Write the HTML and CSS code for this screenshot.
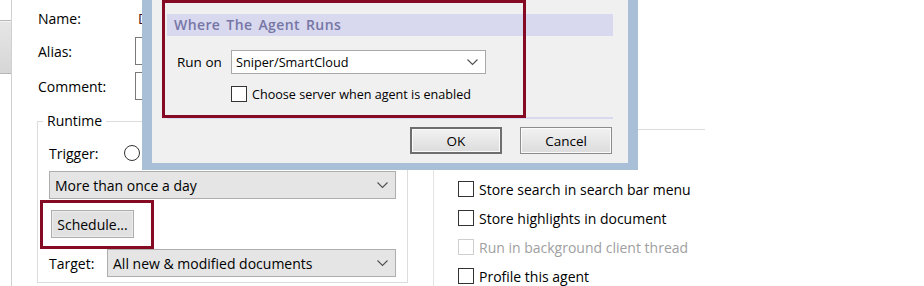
FILE: index.html
```html
<!DOCTYPE html>
<html lang="en">
<head>
  <meta charset="UTF-8" />
  <title>Agent Properties</title>
  <link rel="stylesheet" href="styles.css">
</head>
<body>

<div class="app">
  <div class="side">
    <div class="side-tab"></div>
  </div>

  <div class="main">
    <div class="row row-name">
      <span class="lbl">Name:</span>
      <span class="name-val">D</span>
    </div>
    <div class="row row-alias">
      <span class="lbl">Alias:</span>
      <div class="txt"></div>
    </div>
    <div class="row row-comment">
      <span class="lbl">Comment:</span>
      <div class="txt"></div>
    </div>

    <div class="groups">
      <fieldset class="group runtime">
        <legend>Runtime</legend>
        <div class="trigger">
          <span>Trigger:</span>
          <span class="radio"></span>
        </div>
        <div class="combo grey">
          <span>More than once a day</span>
          <svg class="chev" width="11" height="7" viewBox="0 0 11 7"><polyline points="0.5,0.5 5.5,5.5 10.5,0.5" fill="none" stroke="#505050" stroke-width="1.1"/></svg>
        </div>
        <div class="sched">
          <div class="btn btn-sched">Schedule...</div>
          <!-- highlight box drawn over the button -->
          <div class="mark mark-sched"></div>
        </div>
        <div class="target">
          <span class="lbl-target">Target:</span>
          <div class="combo grey">
            <span>All new &amp; modified documents</span>
            <svg class="chev" width="11" height="7" viewBox="0 0 11 7"><polyline points="0.5,0.5 5.5,5.5 10.5,0.5" fill="none" stroke="#505050" stroke-width="1.1"/></svg>
          </div>
        </div>
      </fieldset>

      <fieldset class="group options">
        <div class="check-row"><span class="box"></span><span>Store search in search bar menu</span></div>
        <div class="check-row"><span class="box"></span><span>Store highlights in document</span></div>
        <div class="check-row disabled"><span class="box"></span><span>Run in background client thread</span></div>
        <div class="check-row"><span class="box"></span><span>Profile this agent</span></div>
      </fieldset>
    </div>
  </div>

  <!-- Dialog floating over the properties page -->
  <div class="dialog">
    <div class="dlg-body">
      <div class="section-head">Where The Agent Runs</div>
      <div class="run-on">
        <span class="run-lbl">Run on</span>
        <div class="combo white">
          <span>Sniper/SmartCloud</span>
          <svg class="chev" width="11" height="7" viewBox="0 0 11 7"><polyline points="0.5,0.5 5.5,5.5 10.5,0.5" fill="none" stroke="#505050" stroke-width="1.1"/></svg>
        </div>
      </div>
      <div class="check-row dlg-check"><span class="box"></span><span>Choose server when agent is enabled</span></div>
      <div class="section-line"></div>
      <div class="dlg-buttons">
        <div class="btn btn-dlg btn-default">OK</div>
        <div class="btn btn-dlg">Cancel</div>
      </div>
      <div class="mark mark-dlg"></div>
    </div>
  </div>
</div>

</body>
</html>
```

FILE: styles.css
```css
body {
  margin: 0;
  background: #ffffff;
  font-family: "Open Sans", "Noto Sans", sans-serif;
  font-size: 14px;
  color: #000;
}
.app {
  position: relative;
  display: flex;
  width: 924px;
  height: 286px;
  overflow: hidden;
}

/* left strip */
.side {
  width: 11px;
  border-right: 1px solid #d0d0d0;
  flex: none;
}
.side-tab {
  margin-top: 20px;
  height: 52px;
  background: linear-gradient(#e6e6e6, #d6d6d6);
  border: 1px solid #b8b8b8;
  border-left: none;
  border-right: none;
  box-shadow: inset 0 28px 0 -27px #f4f4f4;
}

.main {
  padding-left: 26px;
  flex: 1;
}
.row {
  display: flex;
  align-items: center;
  height: 28px;
}
.row-name {
  margin-top: 4px;
}
.row-alias {
  margin-top: 5px;
}
.row-comment {
  margin-top: 7px;
}
.lbl {
  width: 97px;
  flex: none;
}
.name-val {
  color: #4a1010;
  padding-left: 3px;
}
.txt {
  width: 300px;
  height: 26px;
  border: 1px solid #7a7a7a;
  background: #fff;
}

.groups {
  display: flex;
  align-items: flex-start;
  margin-top: 11px;
  margin-left: -1px;
}
.group {
  margin: 0;
  border: 1px solid #dcdcdc;
  padding: 0 11px;
}
.group legend {
  margin-left: -6px;
  padding: 0 4px;
  line-height: 20px;
}
.runtime {
  width: 347px;
  height: 170px;
}
.options {
  width: 236px;
  margin-top: 18px;
  margin-left: 25px;
  padding-left: 24px;
  padding-top: 45px;
  height: 140px;
  border-right: none;
  border-bottom: none;
  border-left-color: #e4e4e4;
}

.trigger {
  display: flex;
  align-items: center;
  height: 20px;
  margin-top: 12px;
}
.radio {
  width: 14px;
  height: 14px;
  border: 1px solid #333;
  border-radius: 50%;
  margin-left: 26px;
}

.combo {
  display: flex;
  align-items: center;
  justify-content: space-between;
  box-sizing: border-box;
  height: 28px;
  padding: 0 7px 0 5px;
  border: 1px solid #adadad;
}
.combo.grey {
  background: #e5e5e5;
  margin-top: 8px;
}
.combo.white {
  background: #fff;
  width: 255px;
  height: 24px;
  border-color: #a9a9a9;
  padding-left: 4px;
  font-size: 12.7px;
}

.sched {
  position: relative;
  margin-top: 11px;
  margin-left: 2px;
  height: 28px;
}
.btn {
  display: flex;
  align-items: center;
  justify-content: center;
  box-sizing: border-box;
  background: #e1e1e1;
  border: 1px solid #adadad;
}
.btn-sched {
  width: 83px;
  height: 28px;
  box-shadow: inset 0 0 0 1px #ececec;
}

.mark {
  position: absolute;
  box-sizing: border-box;
  border: 3px solid #850a23;
}
.mark-sched {
  left: -11px;
  top: -10px;
  width: 114px;
  height: 49px;
}

.target {
  display: flex;
  align-items: center;
  margin-top: 11px;
}
.target .combo {
  margin-top: 0;
  flex: 1;
}
.lbl-target {
  width: 58px;
  flex: none;
}

.check-row {
  display: flex;
  align-items: center;
  height: 28px;
  margin-bottom: 1px;
}
.box {
  width: 14px;
  height: 14px;
  border: 1px solid #333;
  background: #fff;
  margin-right: 5px;
  flex: none;
}
.check-row.disabled {
  color: #a0a0a0;
}
.check-row.disabled .box {
  border-color: #cfcfcf;
}

/* dialog */
.dialog {
  position: absolute;
  left: 142px;
  top: 0;
  width: 476px;
  height: 163px;
  border: 10px solid #a9bfd8;
  border-top: none;
  border-bottom-width: 7px;
  box-shadow: inset 1px 0 0 #98b0cc, inset -2px 0 0 #90a9c6;
}
.dlg-body {
  position: relative;
  height: 163px;
  box-sizing: border-box;
  background: #f0f0f0;
  padding: 14px 15px 0;
  font-size: 13px;
}
.section-head {
  height: 22px;
  line-height: 22px;
  background: #d8d8ee;
  color: #7676a6;
  font-weight: 600;
  font-size: 14px;
  letter-spacing: 0.4px;
  word-spacing: 2px;
  padding-left: 7px;
}
.run-on {
  display: flex;
  align-items: center;
  margin-top: 14px;
}
.run-lbl {
  width: 64px;
  padding-left: 10px;
  box-sizing: border-box;
  flex: none;
  font-size: 13.5px;
}
.dlg-check {
  margin-top: 8px;
  margin-left: 64px;
  height: 24px;
  font-size: 12.6px;
}
.section-line {
  height: 2px;
  background: #d8d8ee;
  margin-top: 11px;
}
.dlg-buttons {
  display: flex;
  justify-content: flex-end;
  gap: 18px;
  margin-top: 8px;
  margin-right: 1px;
}
.btn-dlg {
  width: 92px;
  height: 27px;
  background: linear-gradient(#f2f2f2, #dcdcdc);
  border: 1px solid #8c8c8c;
  box-shadow: inset 0 0 0 1px #fafafa;
  font-size: 13.5px;
}
.btn-default {
  border: 2px solid #6e6e6e;
}
.mark-dlg {
  left: 10px;
  top: 0;
  width: 364px;
  height: 118px;
}
```
